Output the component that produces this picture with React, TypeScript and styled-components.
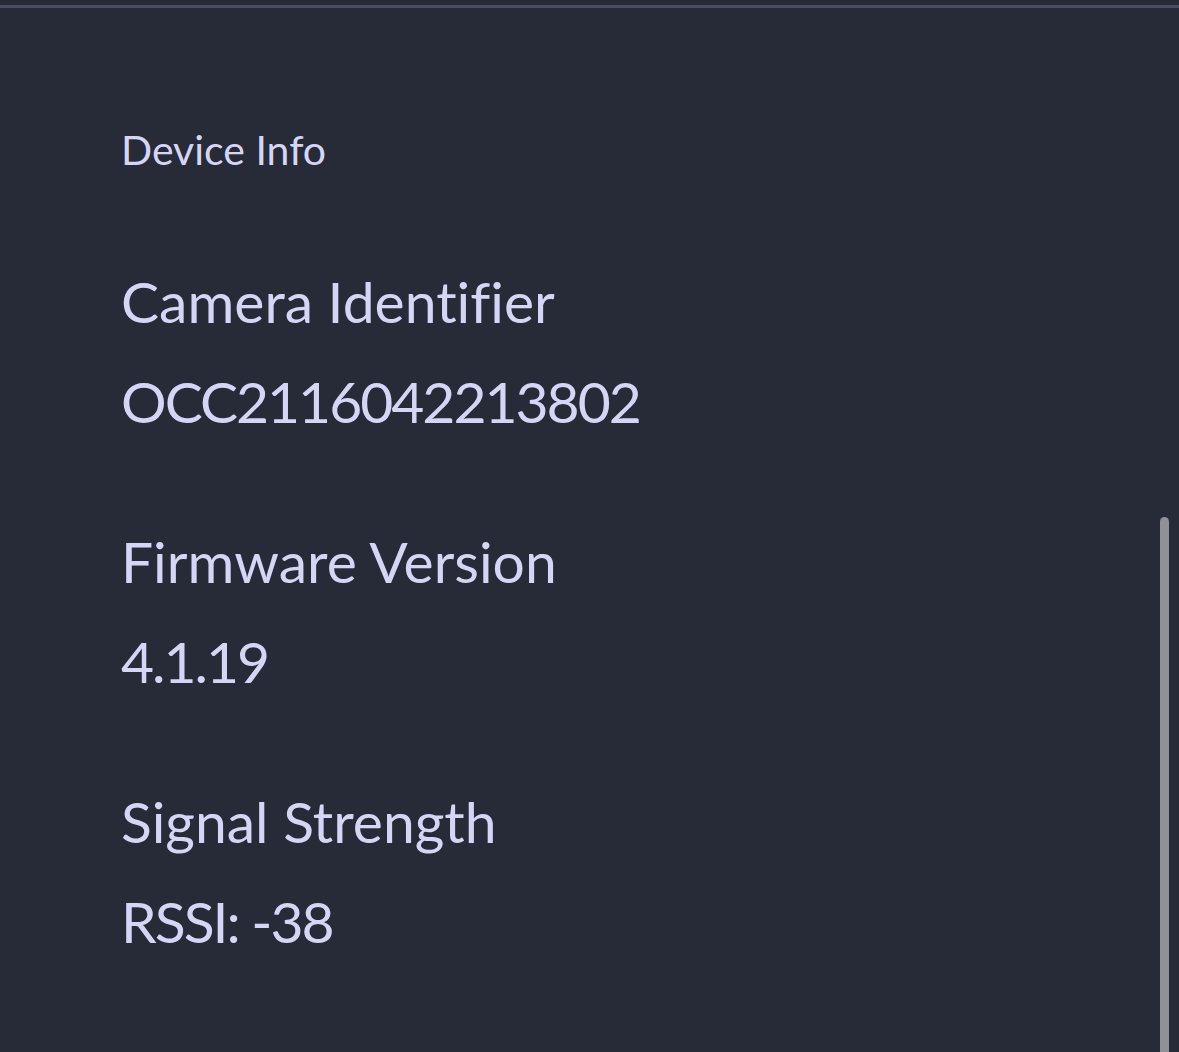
import styled, { createGlobalStyle } from 'styled-components';

const GlobalStyle = createGlobalStyle`
    html, body {
        margin: 0;
        padding: 0;
        background-color: #272a37;
    }
    body {
        font-family: Lato, "Noto Sans", sans-serif;
        color: #d5d5f6;
        font-variant-ligatures: none;
    }
`

const Screen = styled.div`
    width: 1179px;
    height: 1052px;
    background-color: #272a37;
    border-top: 3px solid #4a4d60;
    margin-top: 5px;
    box-sizing: border-box;
    position: relative;
    overflow: hidden;
`

const Content = styled.div`
    padding: 112px 121px 0;
    display: flex;
    flex-direction: column;
`

const SectionTitle = styled.h3`
    margin: 0 0 85px;
    font-size: 41px;
    font-weight: 400;
    line-height: 60px;
`

const InfoList = styled.div`
    display: flex;
    flex-direction: column;
    gap: 88px;
`

const InfoRow = styled.div`
    display: flex;
    flex-direction: column;
    gap: 28px;
`

const Label = styled.div`
    font-size: 57px;
    line-height: 72px;
`

const Value = styled.div`
    font-size: 57px;
    line-height: 72px;
    letter-spacing: -2px;
`

const ScrollThumb = styled.div`
    position: absolute;
    right: 10px;
    top: 509px;
    bottom: 0;
    width: 9px;
    border-radius: 5px 5px 0 0;
    background-color: #8f9098;
`

const items = [
    { label: 'Camera Identifier', value: 'OCC2116042213802' },
    { label: 'Firmware Version', value: '4.1.19' },
    { label: 'Signal Strength', value: 'RSSI: -38' },
]

export default function App() {
    return (
        <>
            <GlobalStyle />
            <Screen>
                <Content>
                    <SectionTitle>Device Info</SectionTitle>
                    <InfoList>
                        {items.map(item => (
                            <InfoRow key={item.label}>
                                <Label>{item.label}</Label>
                                <Value>{item.value}</Value>
                            </InfoRow>
                        ))}
                    </InfoList>
                </Content>
                <ScrollThumb />
            </Screen>
        </>
    )
}
